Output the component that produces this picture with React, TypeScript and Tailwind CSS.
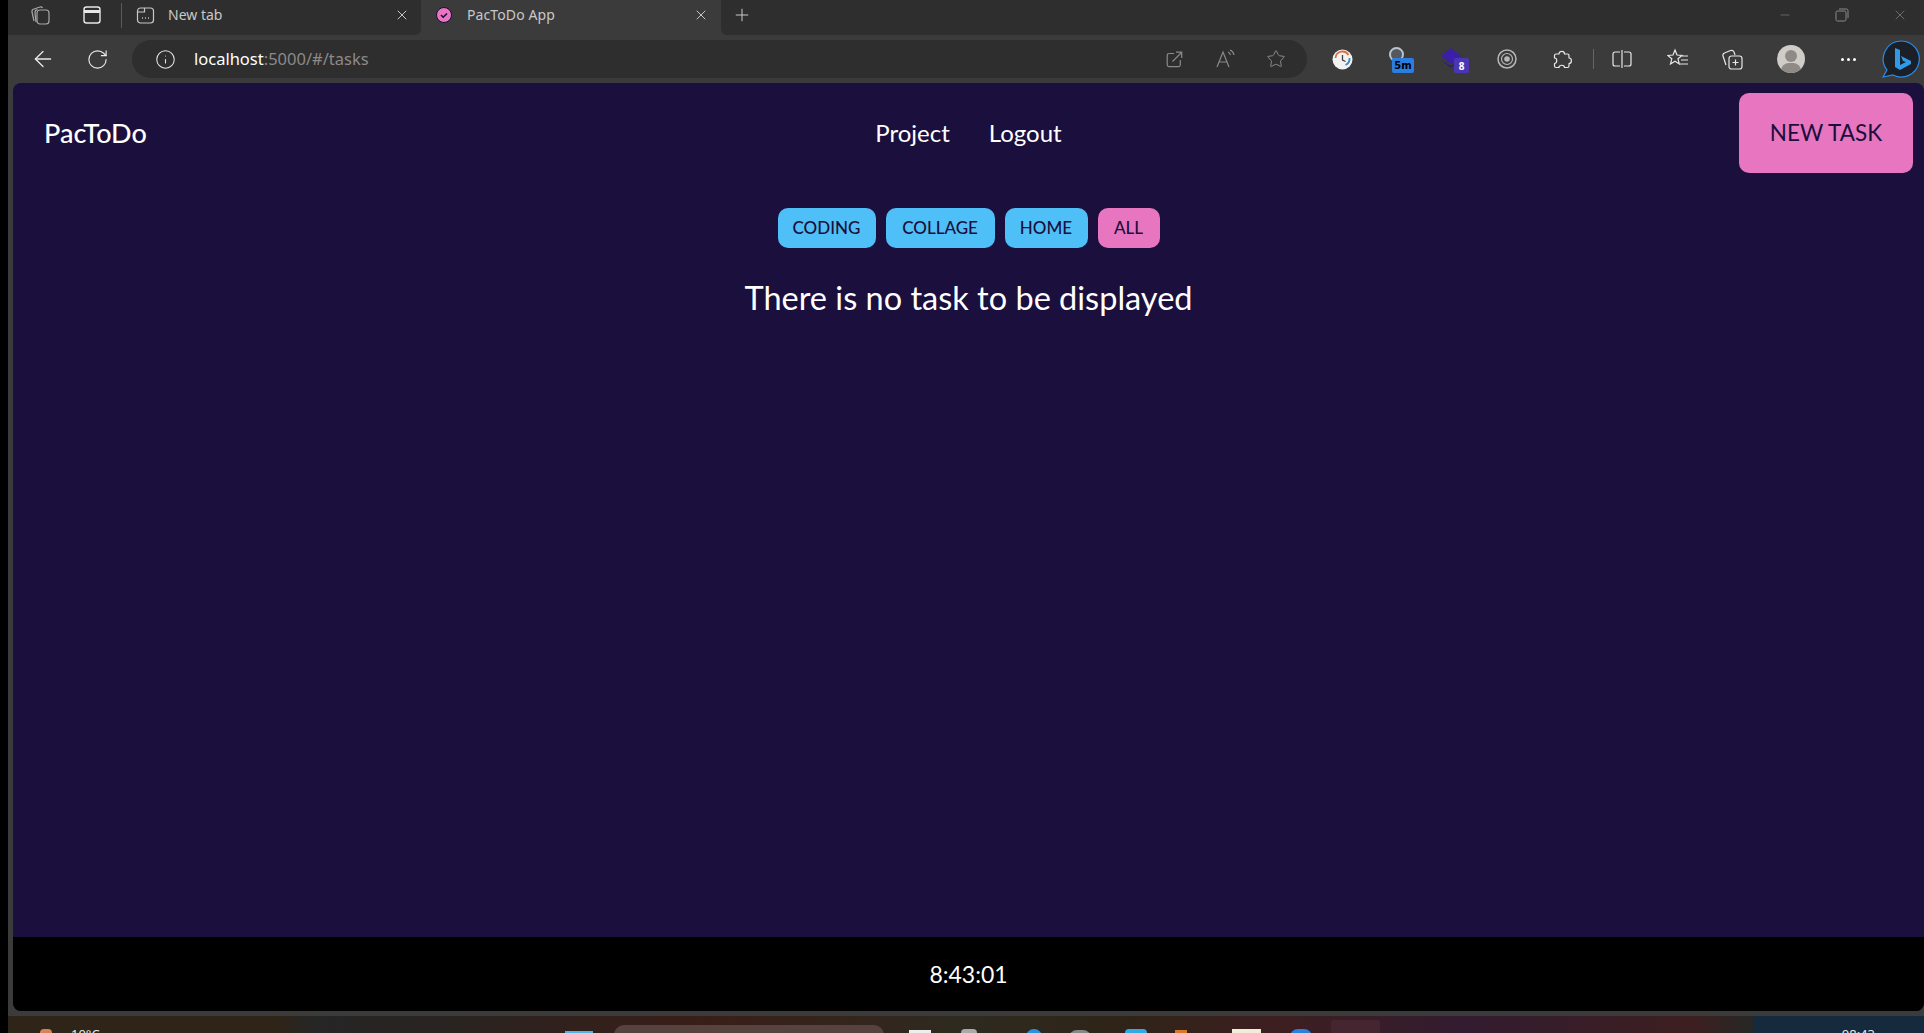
import { X, Plus, ArrowLeft, RotateCw, Info, Star, Minus } from "lucide-react";

const pageFont = "font-['Lato','Noto_Sans',sans-serif]";

function TabBar() {
  return (
    <div className="flex h-[35px] bg-[#3b3b3b] text-[#c8c8c8] text-[14px] font-['Noto_Sans',sans-serif]">
      <div className="flex w-[413px] items-center rounded-br-md bg-[#2e2e2e] pb-[5px]">
        <svg className="ml-[21px] h-[22px] w-[22px]" viewBox="0 0 22 22" fill="none" stroke="#a8a8a8" strokeWidth="1.2">
          <rect x="8" y="6" width="12" height="14" rx="3" />
          <path d="M5 17 3 8c-.3-1.500.5-2.600 2-3l6-2c1.200-.3 2 0 2.600 1" />
          <path d="M7 18 6 9c-.2-2 .8-3 2.500-3.300" />
        </svg>
        <svg className="ml-[31px] h-[20px] w-[20px]" viewBox="0 0 20 20" fill="none" stroke="#e8e8e8" strokeWidth="1.400">
          <rect x="2" y="2" width="16" height="16" rx="2.500" />
          <path d="M2 6.500h16" strokeWidth="3" />
        </svg>
        <div className="ml-[19px] h-[25px] w-px bg-[#5a5a5a]" />
        <svg className="ml-[14px] h-[19px] w-[19px]" viewBox="0 0 19 19" fill="none" stroke="#c8c8c8" strokeWidth="1.200">
          <rect x="1.500" y="2" width="16" height="15" rx="3" />
          <path d="M1.500 6h7V2" />
          <path d="M6 12h.9M9 12h.9M12 12h.9" strokeWidth="1.500" />
        </svg>
        <span className="mb-[2px] ml-[13px]">New tab</span>
        <X className="ml-auto mr-[11px] h-[16px] w-[16px]" strokeWidth={1.5} />
      </div>
      <div className="flex w-[300px] items-center pb-[5px]">
        <svg className="ml-[15px] h-[16px] w-[16px]" viewBox="0 0 16 16" fill="none">
          <circle cx="8" cy="8" r="7.500" fill="#e875bf" stroke="#1a0f3c" />
          <path d="m5 8 2.200 2.200L11 6.500" stroke="#1a0f3c" strokeWidth="1.600" />
        </svg>
        <span className="mb-[2px] ml-[15px] tracking-[0.1px]">PacToDo App</span>
        <X className="ml-auto mr-[12px] h-[16px] w-[16px]" strokeWidth={1.5} />
      </div>
      <div className="flex flex-1 items-center rounded-bl-md bg-[#2e2e2e] pb-[5px]">
        <Plus className="ml-[11px] h-[20px] w-[20px]" strokeWidth={1.2} />
        <div className="ml-auto flex items-center text-[#8a8a8a]">
          <Minus className="mr-[43px] h-[14px] w-[14px]" strokeWidth={1} />
          <svg className="mr-[43px] h-[14px] w-[14px]" viewBox="0 0 14 14" fill="none" stroke="currentColor">
            <rect x="1" y="3" width="10" height="10" rx="1.500" />
            <path d="M4 1h7.500A1.500 1.500 0 0 1 13 2.500V10" />
          </svg>
          <X className="mr-[16px] h-[16px] w-[16px]" strokeWidth={1} />
        </div>
      </div>
    </div>
  );
}

function Toolbar() {
  return (
    <div className="flex h-[48px] items-center bg-[#3b3b3b] text-[#e8e8e8]">
      <ArrowLeft className="ml-[22px] h-[26px] w-[26px]" strokeWidth={1.2} />
      <RotateCw className="ml-[30px] h-[23px] w-[23px]" strokeWidth={1.2} />
      <div className="ml-[23px] flex h-[38px] w-[1175px] items-center rounded-full bg-[#2d2e2d]">
        <Info className="ml-[23px] h-[21px] w-[21px]" strokeWidth={1.2} />
        <span className="ml-[18px] text-[16.500px] font-['Noto_Sans',sans-serif] text-white">
          localhost<span className="text-[#8f8888]">:5000/#/tasks</span>
        </span>
        <div className="ml-auto flex items-center text-[#8a8a8a]">
          <svg className="mr-[33px] h-[17px] w-[17px]" viewBox="0 0 17 17" fill="none" stroke="currentColor" strokeWidth="1.200">
            <path d="M8 2.500H3A1.800 1.800 0 0 0 1.200 4.300v9.500A1.800 1.800 0 0 0 3 15.600h9.500a1.800 1.800 0 0 0 1.800-1.800V9" />
            <path d="M6.500 10.500 15.500 1.500M10 1.200h5.700v5.700" />
          </svg>
          <svg className="mr-[30px] h-[20px] w-[20px]" viewBox="0 0 20 20" fill="none" stroke="currentColor" strokeWidth="1.200">
            <path d="M1 18 7 3l6 15M3 13h8" />
            <path d="M12 3c1.500.5 2 1.500 2.500 3M14 1c2 .8 3.500 2.500 4 5" />
          </svg>
          <Star className="mr-[21px] h-[20px] w-[20px]" strokeWidth={1.2} />
        </div>
      </div>
      <svg className="ml-[25px] h-[21px] w-[21px]" viewBox="0 0 21 21" fill="none">
        <circle cx="10.500" cy="10.500" r="10" fill="#f2f2f2" />
        <path d="M3.500 9a7 7 0 0 1 13-3" stroke="#e0703a" strokeWidth="1.800" />
        <path d="M17.500 9a7 7 0 0 1-4 7" stroke="#3a8bd0" strokeWidth="1.800" />
        <path d="M10.500 6v5l3 1.500" stroke="#444" strokeWidth="1.300" />
      </svg>
      <div className="relative ml-[36px] h-[24px] w-[26px]">
        <div className="absolute left-0 top-0 h-[15px] w-[15px] rounded-full border-2 border-[#b8c4d0] bg-[#55585c]" />
        <div className="absolute left-[3px] top-[11px] flex h-[15px] w-[22px] items-center justify-center rounded-[2px] bg-[#2a7de1] font-['DejaVu_Sans',sans-serif] text-[10px] font-bold leading-none text-black">
          5m
        </div>
      </div>
      <div className="relative ml-[26px] h-[24px] w-[28px]">
        <svg className="absolute left-0 top-0 h-[24px] w-[20px]" viewBox="0 0 20 24" fill="#3b1fa6">
          <path d="M10 1l10 8-10 8L0 9z" />
          <path d="M0 13l10 8 10-8-10 6z" fill="#2f1a84" />
        </svg>
        <div className="absolute left-[13px] top-[11px] flex h-[15px] w-[15px] items-center justify-center rounded-[2px] bg-[#4a35b5] text-[10px] font-bold leading-none text-white">
          8
        </div>
      </div>
      <svg className="ml-[28px] h-[20px] w-[20px]" viewBox="0 0 20 20" fill="none" stroke="#b8b8b8">
        <circle cx="10" cy="10" r="9" strokeWidth="1.500" />
        <circle cx="10" cy="10" r="5.500" strokeWidth="1.200" />
        <circle cx="10" cy="10" r="2.800" fill="#b8b8b8" stroke="none" />
      </svg>
      <svg className="ml-[35px] h-[20px] w-[20px]" viewBox="0 0 20 20" fill="none" stroke="currentColor" strokeWidth="1.200" strokeLinejoin="round">
        <path d="M7 5C7 1.500 12.500 1.500 12.500 5h3A1.500 1.500 0 0 1 17 6.500V9c3.200 0 3.200 5.500 0 5.500V17a1.500 1.500 0 0 1-1.500 1.500H12.500c0-3-5.500-3-5.500 0H4A1.500 1.500 0 0 1 2.500 17v-2.500c3 0 3-5.500 0-5.500V6.500A1.500 1.500 0 0 1 4 5z" />
      </svg>
      <div className="ml-[21px] h-[20px] w-px bg-[#666]" />
      <svg className="ml-[18px] h-[20px] w-[20px]" viewBox="0 0 20 20" fill="none" stroke="currentColor" strokeWidth="1.200">
        <path d="M8 3H3a2 2 0 0 0-2 2v10a2 2 0 0 0 2 2h5M12 3h5a2 2 0 0 1 2 2v10a2 2 0 0 1-2 2h-5M10 1v18" />
      </svg>
      <svg className="ml-[35px] h-[22px] w-[22px]" viewBox="0 0 22 22" fill="none" stroke="currentColor" strokeWidth="1.200">
        <path d="M8 2l2 5 5 .5-4 3.300 1.300 5.200L8 13.200 3.500 16l1.300-5.200-4-3.300 5.200-.5z" />
        <path d="M15 8h6M14 12h7M13 16h8" />
      </svg>
      <svg className="ml-[32px] h-[22px] w-[22px]" viewBox="0 0 22 22" fill="none" stroke="currentColor" strokeWidth="1.200">
        <rect x="8" y="8" width="13" height="13" rx="2.500" />
        <path d="M14.500 11.500v6M11.500 14.500h6" />
        <path d="M5 17 2 8c-.4-1.500.2-2.500 1.500-3l6-2.500c1.500-.5 2.800 0 3.500 1.500l1 3" />
      </svg>
      <div className="relative ml-[34px] h-[28px] w-[28px] overflow-hidden rounded-full bg-[#d0ccc8]">
        <div className="absolute left-[8px] top-[5px] h-[12px] w-[12px] rounded-full bg-[#8f8a86]" />
        <div className="absolute left-[4px] top-[18px] h-[16px] w-[20px] rounded-full bg-[#8f8a86]" />
      </div>
      <div className="ml-[36px] flex gap-[3px]">
        <div className="h-[3px] w-[3px] rounded-full bg-white" />
        <div className="h-[3px] w-[3px] rounded-full bg-white" />
        <div className="h-[3px] w-[3px] rounded-full bg-white" />
      </div>
      <svg className="ml-[26px] h-[38px] w-[38px]" viewBox="0 0 38 38" fill="none">
        <path d="M19 1a18 18 0 1 1-8 34l-10 2 4-7A18 18 0 0 1 19 1z" fill="#1b1f28" stroke="#2a8ce8" strokeWidth="1.200" />
        <path d="M13 8l5 2v15l6-3-3-1-2-5 10 5v3l-11 6-5-3z" fill="#2f9ae8" />
      </svg>
    </div>
  );
}

function FilterButton({ label, width, active }: { label: string; width: string; active?: boolean }) {
  return (
    <button
      className={`h-[40px] rounded-[10px] text-[17px] font-medium text-[#1a0f3c] ${width} ${
        active ? "bg-[#e875bf]" : "bg-[#4fc0f7]"
      }`}
    >
      {label}
    </button>
  );
}

function TaskPage() {
  return (
    <div className={`ml-[5px] flex h-[928px] flex-col overflow-hidden rounded-lg bg-[#1b0f3d] text-white ${pageFont}`}>
      {/* Header */}
      <div className="grid grid-cols-3 items-center pt-[10px]">
        <div className="pl-[31px] text-[27px] font-medium">PacToDo</div>
        <div className="flex justify-center gap-[39px] text-[24px]">
          <span>Project</span>
          <span>Logout</span>
        </div>
        <div className="flex justify-end pr-[11px]">
          <button className="h-[80px] w-[174px] rounded-[10px] bg-[#e875bf] text-[22.500px] text-[#1a0f3c]">NEW TASK</button>
        </div>
      </div>

      {/* Content */}
      <div className="mt-[35px] flex justify-center gap-[10px]">
        <FilterButton label="CODING" width="w-[98px]" />
        <FilterButton label="COLLAGE" width="w-[109px]" />
        <FilterButton label="HOME" width="w-[83px]" />
        <FilterButton label="ALL" width="w-[62px]" active />
      </div>
      <p className="mt-[30px] text-center text-[32.500px] leading-[40px]">There is no task to be displayed</p>

      {/* Clock */}
      <div className="mt-auto flex h-[74px] items-center justify-center bg-black text-[23px]">8:43:01</div>
    </div>
  );
}

function Taskbar() {
  return (
    <div className="flex h-[17px] items-start overflow-hidden bg-[linear-gradient(90deg,#2f2418_0%,#2f2418_14%,#262626_16%,#2a2320_24%,#3a1e18_36%,#2e2a20_50%,#2e2418_58%,#3d1f20_66%,#331c30_76%,#3d1f20_88%,#272727_91%,#162a3d_91.200%)] text-white">
      <div className="ml-[32px] mt-[13px] h-[8px] w-[12px] rounded-full bg-[#d9825a]" />
      <span className="ml-[19px] mt-[10px] text-[13px] leading-[16px] font-['Noto_Sans',sans-serif] text-[#e8e8e8]">10°C</span>
      <div className="ml-[465px] mt-[15px] h-[8px] w-[28px] bg-[#4fb4ea]" />
      <div className="ml-[21px] mt-[9px] h-[12px] w-[270px] rounded-t-[10px] bg-[#56433f]" />
      <div className="ml-[25px] mt-[14px] h-[8px] w-[22px] bg-[#eee]" />
      <div className="ml-[30px] mt-[13px] h-[8px] w-[16px] rounded-full bg-[#aaa]" />
      <div className="ml-[49px] mt-[13px] h-[8px] w-[16px] rounded-t-full bg-[#2a90e0]" />
      <div className="ml-[27px] mt-[14px] h-[8px] w-[22px] rounded-t-full bg-[#888]" />
      <div className="ml-[34px] mt-[13px] h-[8px] w-[22px] rounded-full bg-[#31a8e8]" />
      <div className="ml-[28px] mt-[14px] h-[8px] w-[12px] bg-[#d9782a]" />
      <div className="ml-[45px] mt-[13px] h-[8px] w-[29px] bg-[#f2ecd8]" />
      <div className="ml-[29px] mt-[13px] h-[8px] w-[22px] rounded-t-full bg-[#2a80e0]" />
      <div className="ml-[19px] mt-[4px] h-[20px] w-[49px] rounded-t-[3px] bg-[#45252f]" />
      <span className="ml-auto mr-[49px] mt-[10px] text-[13px] leading-[16px] font-['Noto_Sans',sans-serif] text-[#e8e8e8]">08:43</span>
    </div>
  );
}

export default function App() {
  return (
    <div className="flex h-[1033px] w-full overflow-hidden bg-black">
      <div className="w-[8px] shrink-0 bg-black" />
      <div className="min-w-0 flex-1">
        <TabBar />
        <div className="bg-[#3b3b3b] pb-[5px]">
          <Toolbar />
          <TaskPage />
        </div>
        <Taskbar />
      </div>
    </div>
  );
}
